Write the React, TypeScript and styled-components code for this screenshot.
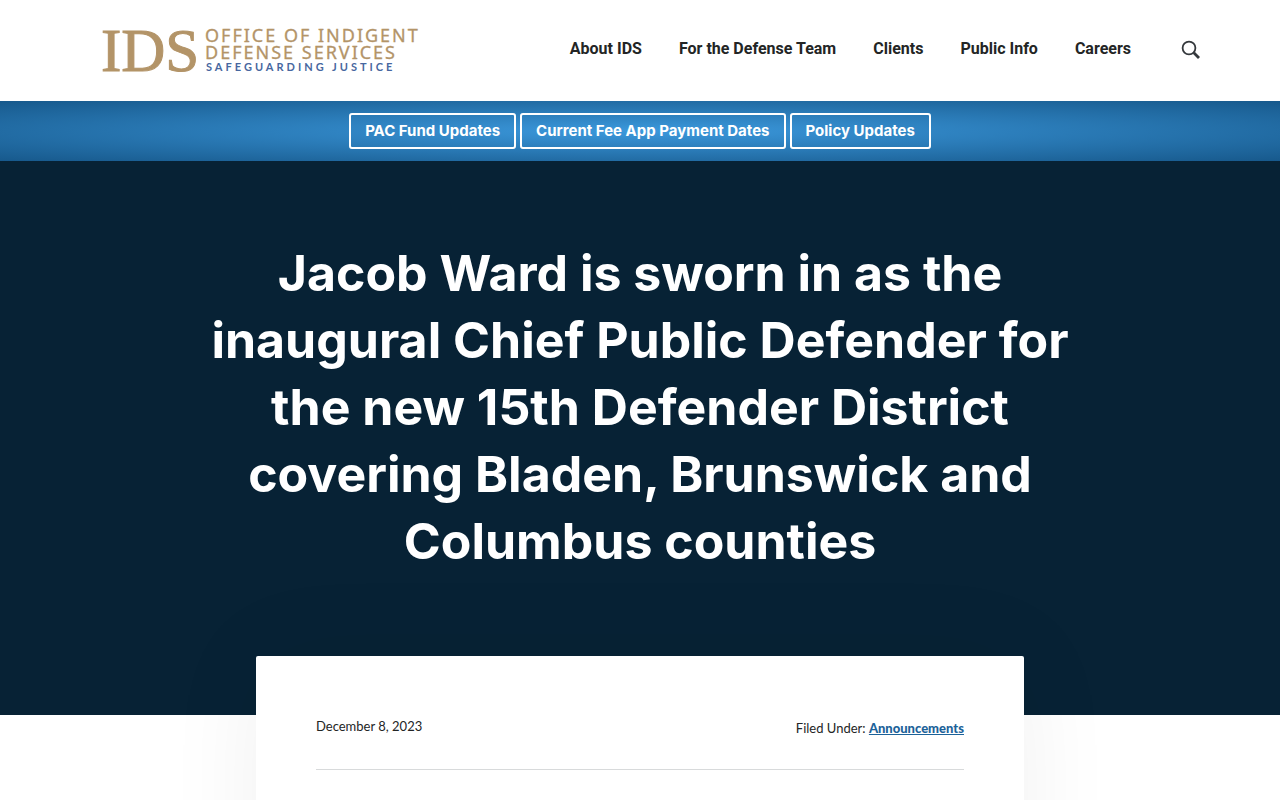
import React from "react";
import styled, { createGlobalStyle } from "styled-components";

const GlobalStyle = createGlobalStyle`
  *, *::before, *::after { box-sizing: border-box; }
  body {
    margin: 0;
    background: #fff;
    color: #232525;
    font-family: Inter, "Liberation Sans", sans-serif;
  }
`;

const Page = styled.div`
  display: flex;
  flex-direction: column;
  min-height: 100vh;
  overflow: clip;
`;

const Header = styled.header`
  display: flex;
  align-items: center;
  justify-content: space-between;
  min-height: 101px;
  padding: 0 79px 0 100px;
`;

const LogoLink = styled.a`
  display: block;
  line-height: 0;
`;

const NavBar = styled.nav`
  display: flex;
  align-items: center;
`;

const NavList = styled.ul`
  display: flex;
  gap: 37px;
  margin: 0;
  padding: 0 0 4px;
  list-style: none;
`;

const NavLink = styled.a`
  color: #232525;
  font-family: Roboto, sans-serif;
  font-size: 16px;
  font-weight: 700;
  line-height: 24px;
  text-decoration: none;
`;

const SearchButton = styled.button`
  display: flex;
  margin-left: 50px;
  padding: 0 0 2px;
  border: 0;
  background: none;
  color: #34383c;
  cursor: pointer;
`;

const NoticeBar = styled.section`
  display: flex;
  flex-wrap: wrap;
  justify-content: center;
  gap: 4px;
  padding: 12px 20px;
  background: radial-gradient(ellipse at center, #3b98dc 0%, #17598c 100%);
`;

const NoticeLink = styled.a`
  padding: 4px 14px;
  border: 2px solid #fff;
  border-radius: 3px;
  color: #fff;
  font-size: 15px;
  font-weight: 700;
  line-height: 24px;
  text-decoration: none;
`;

const Hero = styled.section`
  padding: 79px 20px 140px;
  background: #072235;
`;

const Title = styled.h1`
  margin: 0;
  color: #fff;
  font-size: 50px;
  font-weight: 700;
  line-height: 67px;
  text-align: center;
`;

const Article = styled.article`
  flex: 1;
  width: 60%;
  margin: -59px auto -120px;
  padding: 60px 60px 180px;
  border-radius: 2px;
  background: #fff;
  box-shadow: 0 0 100px rgba(0, 0, 0, 0.06);
`;

const Meta = styled.div`
  display: flex;
  align-items: flex-start;
  justify-content: space-between;
  padding-bottom: 31px;
  border-bottom: 1px solid #d8dadb;
  font-family: Lato, sans-serif;
  font-size: 13px;
  line-height: 20px;
`;

const Category = styled.p`
  margin: 0;
  padding-top: 2px;
`;

const CategoryLink = styled.a`
  color: #1c6299;
  font-weight: 900;
`;

const navItems = ["About IDS", "For the Defense Team", "Clients", "Public Info", "Careers"];
const notices = ["PAC Fund Updates", "Current Fee App Payment Dates", "Policy Updates"];

function Logo() {
  return (
    <svg width="340" height="84" viewBox="0 0 340 84" role="img" aria-label="Office of Indigent Defense Services">
      <text x="1" y="62" fill="#b39468" stroke="#b39468" strokeWidth="1" fontFamily="Liberation Serif, serif" fontSize="61">
        IDS
      </text>
      <g fill="#b39468" stroke="#b39468" strokeWidth="0.3" fontFamily="Noto Sans, sans-serif" fontSize="18" letterSpacing="2">
        <text x="105" y="33">OFFICE OF INDIGENT</text>
        <text x="105" y="50">DEFENSE SERVICES</text>
      </g>
      <text x="106" y="62" fill="#4767a0" fontFamily="Lato, sans-serif" fontSize="11" fontWeight="700" letterSpacing="3">
        SAFEGUARDING JUSTICE
      </text>
    </svg>
  );
}

function SearchIcon() {
  return (
    <svg width="20" height="20" viewBox="0 0 20 20" fill="none" stroke="currentColor" aria-hidden="true">
      <circle cx="8" cy="8" r="6.4" strokeWidth="1.8" />
      <path d="M12.8 12.8 18 18" strokeWidth="2.8" />
    </svg>
  );
}

export default function App() {
  return (
    <Page>
      <GlobalStyle />
      <Header>
        <LogoLink href="#">
          <Logo />
        </LogoLink>
        <NavBar aria-label="Main">
          <NavList>
            {navItems.map((item) => (
              <li key={item}>
                <NavLink href="#">{item}</NavLink>
              </li>
            ))}
          </NavList>
          <SearchButton type="button" aria-label="Search">
            <SearchIcon />
          </SearchButton>
        </NavBar>
      </Header>
      <NoticeBar>
        {notices.map((notice) => (
          <NoticeLink key={notice} href="#">
            {notice}
          </NoticeLink>
        ))}
      </NoticeBar>
      <Hero>
        <Title>
          Jacob Ward is sworn in as the
          <br />
          inaugural Chief Public Defender for
          <br />
          the new 15th Defender District
          <br />
          covering Bladen, Brunswick and
          <br />
          Columbus counties
        </Title>
      </Hero>
      <Article>
        <Meta>
          <time dateTime="2023-12-08">December 8, 2023</time>
          <Category>
            Filed Under: <CategoryLink href="#">Announcements</CategoryLink>
          </Category>
        </Meta>
      </Article>
    </Page>
  );
}
